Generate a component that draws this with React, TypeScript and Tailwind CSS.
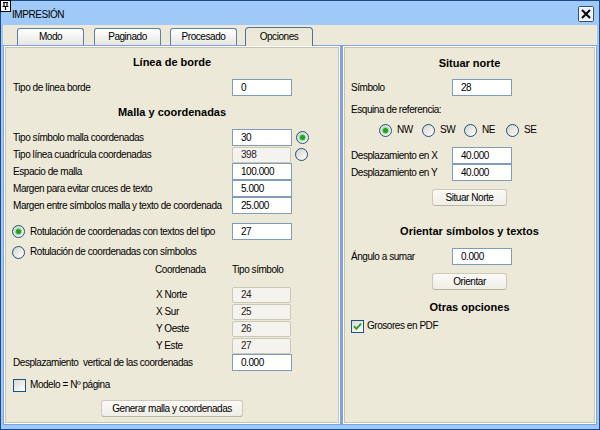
import React from "react";

function Radio({ checked }: { checked?: boolean }) {
  return (
    <span className="w-[13px] h-[13px] shrink-0 rounded-full border border-[#1c5180] bg-linear-to-br from-[#d6d3c8] to-white flex items-center justify-center">
      {checked && <span className="w-[5px] h-[5px] rounded-full bg-[#21a121] shadow-[0_0_1px_1px_#8ad88a]" />}
    </span>
  );
}

function Check({ checked }: { checked?: boolean }) {
  return (
    <span className="w-[13px] h-[13px] shrink-0 border border-[#1c5180] bg-linear-to-br from-[#d9d8d0] to-white flex items-center justify-center">
      {checked && (
        <svg width="9" height="9" viewBox="0 0 9 9">
          <path d="M1 4.2 L3.4 6.8 L8 1.6" fill="none" stroke="#21a121" strokeWidth="1.8" />
        </svg>
      )}
    </span>
  );
}

function Box({ value, disabled }: { value: string; disabled?: boolean }) {
  if (disabled)
    return (
      <div className="w-[59px] h-[16px] shrink-0 rounded-[2px] border border-[#cbc8ba] bg-[#f4f3ee] pl-[8px] flex items-center text-[#1e1e1e]">
        {value}
      </div>
    );
  return (
    <div className="w-[60px] h-[17px] shrink-0 border border-[#7f9db9] bg-white pl-[8px] flex items-center">
      {value}
    </div>
  );
}

function Header({ children, className }: { children: React.ReactNode; className: string }) {
  return (
    <div className={`h-[16px] flex items-center justify-center text-[11px] font-bold tracking-normal ${className}`}>
      {children}
    </div>
  );
}

function Btn({ children, className }: { children: React.ReactNode; className: string }) {
  return (
    <div className="flex justify-center">
      <div
        className={`h-[17px] rounded-[3px] border border-[#cdc9ba] border-b-[#b9b5a5] bg-linear-to-b from-[#fbfaf7] to-[#eeede6] flex items-center justify-center ${className}`}
      >
        {children}
      </div>
    </div>
  );
}

// fila de la izquierda: etiqueta + caja (+ radio opcional)
function LeftRow({ label, value, disabled, radio }: { label: string; value: string; disabled?: boolean; radio?: "on" | "off" }) {
  return (
    <div className="h-[17px] flex items-center pl-[7px]">
      <span className="w-[219px] shrink-0 whitespace-pre">{label}</span>
      <Box value={value} disabled={disabled} />
      {radio && (
        <span className="ml-[4px]">
          <Radio checked={radio === "on"} />
        </span>
      )}
    </div>
  );
}

function CoordRow({ label, value }: { label: string; value: string }) {
  return (
    <div className="h-[17px] flex items-center pl-[150px]">
      <span className="w-[76px] shrink-0">{label}</span>
      <Box value={value} disabled />
    </div>
  );
}

function RightRow({ label, value }: { label: string; value: string }) {
  return (
    <div className="h-[17px] flex items-center pl-[6px]">
      <span className="w-[101px] shrink-0">{label}</span>
      <Box value={value} />
    </div>
  );
}

function Tab({ label, className }: { label: string; className: string }) {
  return (
    <div
      className={`w-[67px] h-[17px] rounded-t-[3px] border border-b-0 border-[#5f7ea8] bg-linear-to-b from-white to-[#e6e6e1] flex items-center justify-center ${className}`}
    >
      {label}
    </div>
  );
}

export default function App() {
  return (
    <div className="w-[600px] h-[430px] bg-[#1d4a8a] p-px relative font-['Liberation_Sans',Arial,sans-serif] text-[10px] leading-[12px] tracking-[-0.45px] text-black">
      <div className="h-full bg-[#9fc9f6] flex flex-col">
        {/* barra de título */}
        <div className="h-[24px] shrink-0 flex items-start justify-between pl-[11px] pr-[5px]">
          <span className="mt-[8px]">IMPRESIÓN</span>
          <svg className="mt-[5px]" width="16" height="16" viewBox="0 0 16 16">
            <rect x="0.5" y="0.5" width="15" height="15" rx="1.5" fill="#eaf1fb" stroke="#2b4d80" />
            <rect x="1.5" y="1.5" width="13" height="13" fill="none" stroke="#ffffff" />
            <path d="M4 4 L12 12 M12 4 L4 12" stroke="#000" strokeWidth="2" />
          </svg>
        </div>

        <div className="flex-1 mx-[2px] mb-[4px] bg-[#ece9d8] flex flex-col">
          {/* pestañas */}
          <div className="h-[20px] shrink-0 flex items-end pl-[14px]">
            <Tab label="Modo" className="mr-[10px]" />
            <Tab label="Paginado" className="mr-[9px]" />
            <Tab label="Procesado" className="mr-[8px]" />
            <div className="relative z-10 w-[68px] h-[19px] -mb-px rounded-t-[4px] border border-b-0 border-[#4f6f9c] bg-[#ece9d8] flex items-center justify-center pb-[1px]">
              Opciones
            </div>
          </div>

          <div className="flex-1 border border-[#7ea3dc] flex">
            {/* panel izquierdo */}
            <div className="w-[336px] shrink-0 border border-white">
              <div className="h-full border border-[#c9c2ad] flex flex-col">
                <Header className="mt-[6px]">Línea de borde</Header>
                <div className="mt-[9px]">
                  <LeftRow label="Tipo de línea borde" value="0" />
                </div>
                <Header className="mt-[8px]">Malla y coordenadas</Header>
                <div className="mt-[9px] flex flex-col">
                  <LeftRow label="Tipo símbolo malla coordenadas" value="30" radio="on" />
                  <LeftRow label="Tipo línea cuadrícula coordenadas" value="398" disabled radio="off" />
                  <LeftRow label="Espacio de malla" value="100.000" />
                  <LeftRow label="Margen para evitar cruces de texto" value="5.000" />
                  <LeftRow label="Margen entre símbolos malla y texto de coordenada" value="25.000" />
                </div>
                <div className="mt-[9px] h-[17px] flex items-center pl-[6px]">
                  <Radio checked />
                  <span className="ml-[5px] w-[202px] shrink-0">Rotulación de coordenadas con textos del tipo</span>
                  <Box value="27" />
                </div>
                <div className="mt-[4px] h-[16px] flex items-center pl-[6px]">
                  <Radio />
                  <span className="ml-[5px]">Rotulación de coordenadas con símbolos</span>
                </div>
                <div className="mt-[2px] h-[16px] flex items-center pl-[149px]">
                  <span className="w-[77px] shrink-0">Coordenada</span>
                  <span>Tipo símbolo</span>
                </div>
                <div className="mt-[8px] flex flex-col">
                  <CoordRow label="X Norte" value="24" />
                  <CoordRow label="X Sur" value="25" />
                  <CoordRow label="Y Oeste" value="26" />
                  <CoordRow label="Y Este" value="27" />
                </div>
                <LeftRow label="Desplazamiento  vertical de las coordenadas" value="0.000" />
                <div className="mt-[6px] h-[16px] flex items-center pl-[7px]">
                  <Check />
                  <span className="ml-[4px]">Modelo = Nº página</span>
                </div>
                <div className="mt-[7px]">
                  <Btn className="w-[142px]">Generar malla y coordenadas</Btn>
                </div>
              </div>
            </div>

            <div className="w-[3px] shrink-0 bg-[#7ea3dc]" />

            {/* panel derecho */}
            <div className="flex-1 border border-white">
              <div className="h-full border border-[#c9c2ad] flex flex-col">
                <Header className="mt-[7px]">Situar norte</Header>
                <div className="mt-[8px]">
                  <RightRow label="Símbolo" value="28" />
                </div>
                <div className="mt-[6px] h-[16px] flex items-center pl-[6px]">Esquina de referencia:</div>
                <div className="mt-[4px] h-[16px] flex items-center pl-[34px]">
                  <div className="w-[43px] flex items-center">
                    <Radio checked />
                    <span className="ml-[5px]">NW</span>
                  </div>
                  <div className="w-[42px] flex items-center">
                    <Radio />
                    <span className="ml-[5px]">SW</span>
                  </div>
                  <div className="w-[42px] flex items-center">
                    <Radio />
                    <span className="ml-[5px]">NE</span>
                  </div>
                  <div className="flex items-center">
                    <Radio />
                    <span className="ml-[5px]">SE</span>
                  </div>
                </div>
                <div className="mt-[9px] flex flex-col">
                  <RightRow label="Desplazamiento en X" value="40.000" />
                  <RightRow label="Desplazamiento en Y" value="40.000" />
                </div>
                <div className="mt-[8px]">
                  <Btn className="w-[75px]">Situar Norte</Btn>
                </div>
                <Header className="mt-[17px]">Orientar símbolos y textos</Header>
                <div className="mt-[9px]">
                  <RightRow label="Ángulo a sumar" value="0.000" />
                </div>
                <div className="mt-[8px]">
                  <Btn className="w-[75px]">Orientar</Btn>
                </div>
                <Header className="mt-[9px]">Otras opciones</Header>
                <div className="mt-[3px] h-[16px] flex items-center pl-[6px]">
                  <Check checked />
                  <span className="ml-[3px]">Grosores en PDF</span>
                </div>
              </div>
            </div>
          </div>
        </div>
      </div>

      {/* icono de chincheta */}
      <svg className="absolute left-0 top-0" width="11" height="12" viewBox="0 0 11 12">
        <rect x="0.5" y="0.5" width="10" height="11" fill="#fff" stroke="#000" />
        <path d="M3 2.5 H8 M4 2.5 V6 M7 2.5 V6 M2.5 6.5 H8.5 M5.5 6.5 V10" stroke="#000" strokeWidth="1.2" fill="none" />
      </svg>
    </div>
  );
}
